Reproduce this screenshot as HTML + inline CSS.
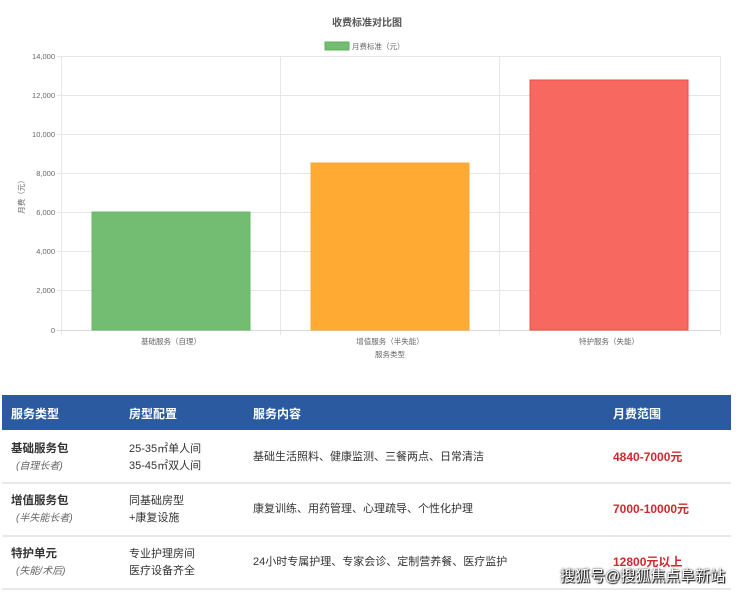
<!DOCTYPE html>
<html><head><meta charset="utf-8"><style>
body{margin:0;width:740px;height:592px;background:#fff;font-family:"Liberation Sans","Noto Sans CJK SC",sans-serif;position:relative;overflow:hidden}
.t{position:absolute;white-space:nowrap}
.hdr{position:absolute;left:2px;top:395px;width:729px;height:35px;background:#2b5aa0;color:#fff;font-weight:bold;font-size:12px}
.row{position:absolute;left:2px;width:729px;border-bottom:2px solid #e8e8e8}
.c{position:absolute;font-size:11px;color:#333;line-height:17px;white-space:nowrap}
.b{font-weight:bold;font-size:11.5px;color:#333}
.sub{font-size:10px;color:#666;font-style:italic;padding-left:5px}
.p{color:#d0282e;font-weight:bold;font-size:12px}
</style></head><body>
<svg width="740" height="370" style="position:absolute;left:0;top:0" font-family="Liberation Sans,Noto Sans CJK SC,sans-serif">
<text x="367" y="26" font-size="10" font-weight="bold" fill="#555" text-anchor="middle">收费标准对比图</text>
<rect x="325" y="42" width="24" height="8" fill="#72bd72" stroke="#5fb05f" stroke-width="1"/>
<text x="352" y="49" font-size="7.5" fill="#666">月费标准（元）</text>
<g stroke="#e6e6e6" stroke-width="1">
<line x1="57" y1="56.5" x2="720" y2="56.5"/><line x1="57" y1="95.5" x2="720" y2="95.5"/><line x1="57" y1="134.5" x2="720" y2="134.5"/><line x1="57" y1="173.5" x2="720" y2="173.5"/><line x1="57" y1="212.5" x2="720" y2="212.5"/><line x1="57" y1="251.5" x2="720" y2="251.5"/><line x1="57" y1="290.5" x2="720" y2="290.5"/>
<line x1="61.5" y1="56" x2="61.5" y2="335"/><line x1="280.5" y1="56" x2="280.5" y2="335"/><line x1="499.5" y1="56" x2="499.5" y2="335"/><line x1="720.5" y1="56" x2="720.5" y2="335"/>
</g>
<line x1="57" y1="330.5" x2="720" y2="330.5" stroke="#d8d8d8"/>
<g font-size="7.5" fill="#666" text-anchor="end">
<text x="55" y="59">14,000</text><text x="55" y="98">12,000</text><text x="55" y="137">10,000</text><text x="55" y="176">8,000</text><text x="55" y="215">6,000</text><text x="55" y="254">4,000</text><text x="55" y="293">2,000</text><text x="55" y="333">0</text>
</g>
<text transform="translate(24,195) rotate(-90)" font-size="7.5" fill="#666" text-anchor="middle">月费（元）</text>
<rect x="92" y="212" width="158" height="118" fill="#72bd72" stroke="#6ab86a"/>
<rect x="311" y="163" width="158" height="167" fill="#ffab33" stroke="#f8a830"/>
<rect x="530" y="80" width="158" height="250" fill="#f66860" stroke="#ee4b44"/>
<g font-size="7.5" fill="#666" text-anchor="middle">
<text x="171" y="344">基础服务（自理）</text><text x="390" y="344">增值服务（半失能）</text><text x="609" y="344">特护服务（失能）</text>
<text x="390" y="357">服务类型</text>
</g>
</svg>
<div class="hdr"><span class="t" style="left:9px;top:10px">服务类型</span><span class="t" style="left:127px;top:10px">房型配置</span><span class="t" style="left:251px;top:10px">服务内容</span><span class="t" style="left:611px;top:10px">月费范围</span></div>
<div class="row" style="top:430px;height:52px">
<div class="c" style="left:9px;top:11px"><span class="b">基础服务包</span><br><span class="sub">(自理长者)</span></div>
<div class="c" style="left:127px;top:11px">25-35㎡单人间<br>35-45㎡双人间</div>
<div class="c" style="left:251px;top:19px">基础生活照料、健康监测、三餐两点、日常清洁</div>
<div class="c p" style="left:611px;top:19px">4840-7000元</div></div>
<div class="row" style="top:484px;height:51px">
<div class="c" style="left:9px;top:9px"><span class="b">增值服务包</span><br><span class="sub">(半失能长者)</span></div>
<div class="c" style="left:127px;top:9px">同基础房型<br>+康复设施</div>
<div class="c" style="left:251px;top:17px">康复训练、用药管理、心理疏导、个性化护理</div>
<div class="c p" style="left:611px;top:17px">7000-10000元</div></div>
<div class="row" style="top:537px;height:51px">
<div class="c" style="left:9px;top:9px"><span class="b">特护单元</span><br><span class="sub">(失能/术后)</span></div>
<div class="c" style="left:127px;top:9px">专业护理房间<br>医疗设备齐全</div>
<div class="c" style="left:251px;top:17px">24小时专属护理、专家会诊、定制营养餐、医疗监护</div>
<div class="c p" style="left:611px;top:17px">12800元以上</div></div>
<div class="t" style="left:560px;top:565px;font-size:15px;color:#fff;text-shadow:0 0 2px #000,1px 1px 1px #000">搜狐号@搜狐焦点阜新站</div>
</body></html>
